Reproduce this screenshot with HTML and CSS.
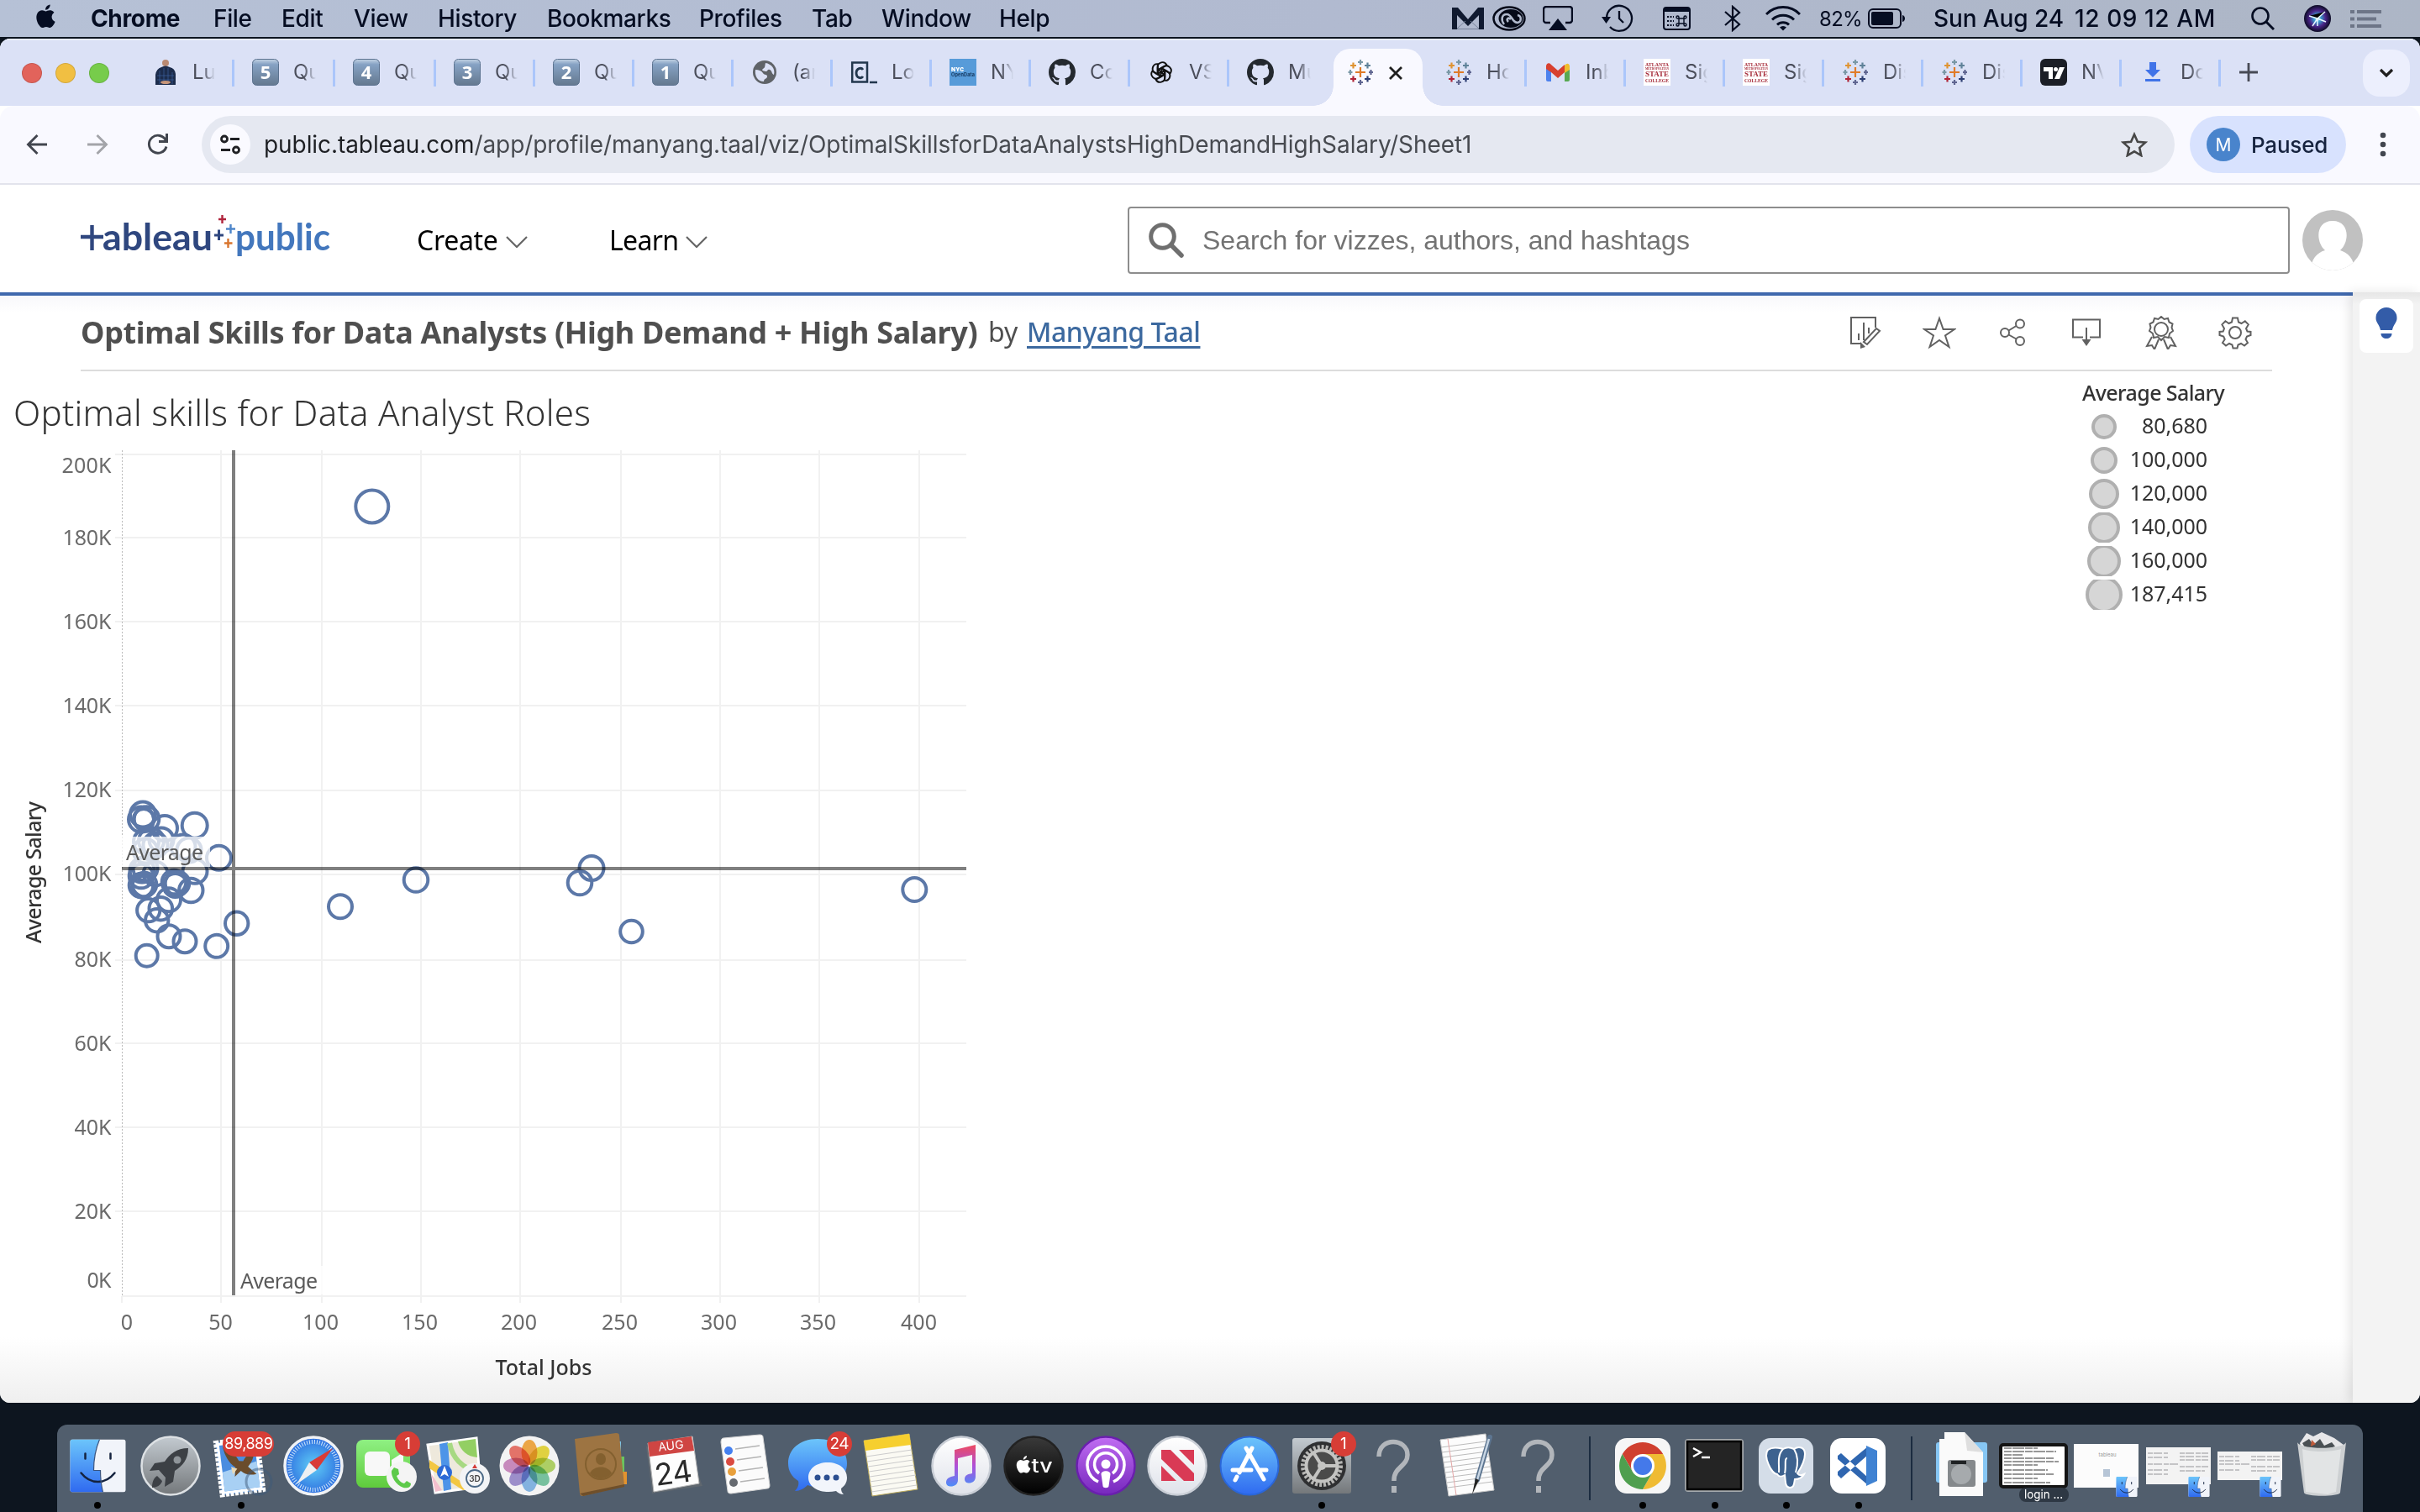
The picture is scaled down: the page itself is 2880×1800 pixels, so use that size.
FILE: index.html
```html
<!DOCTYPE html>
<html lang="en">
<head>
<meta charset="utf-8">
<title>Optimal Skills for Data Analysts</title>
<link rel="stylesheet" href="styles.css">
</head>
<body>
<svg class="defs" width="0" height="0">
  <defs>
    <linearGradient id="gKey" x1="0" y1="0" x2="0" y2="1"><stop offset="0" stop-color="#c3d3e4"/><stop offset=".2" stop-color="#86a2c4"/><stop offset="1" stop-color="#64788f"/></linearGradient>
    <linearGradient id="gBlue" x1="0" y1="0" x2="0" y2="1"><stop offset="0" stop-color="#6cc5fb"/><stop offset="1" stop-color="#2f6af0"/></linearGradient>
    <linearGradient id="gGrey" x1="0" y1="0" x2="0" y2="1"><stop offset="0" stop-color="#c3cad0"/><stop offset="1" stop-color="#74787b"/></linearGradient>
    <linearGradient id="gWhite" x1="0" y1="0" x2="0" y2="1"><stop offset="0" stop-color="#fff"/><stop offset="1" stop-color="#dfe2ea"/></linearGradient>
    <linearGradient id="gGreen" x1="0" y1="0" x2="0" y2="1"><stop offset="0" stop-color="#8ff083"/><stop offset="1" stop-color="#5fcb3c"/></linearGradient>
    <linearGradient id="gPurple" x1="0" y1="0" x2="0" y2="1"><stop offset="0" stop-color="#c06cf2"/><stop offset="1" stop-color="#7628bd"/></linearGradient>
    <linearGradient id="gBlack" x1="0" y1="0" x2="0" y2="1"><stop offset="0" stop-color="#3a3a3a"/><stop offset="1" stop-color="#000"/></linearGradient>
    <linearGradient id="gMusic" x1="0" y1="0" x2="0" y2="1"><stop offset="0" stop-color="#ee4a60"/><stop offset=".5" stop-color="#b04fd8"/><stop offset="1" stop-color="#4c8cf8"/></linearGradient>
    <radialGradient id="gSafari"><stop offset="0" stop-color="#5fcdf6"/><stop offset="1" stop-color="#2e6fe0"/></radialGradient>
    <radialGradient id="gSiri"><stop offset="0" stop-color="#e8f6ff"/><stop offset=".25" stop-color="#3a9fd0"/><stop offset=".6" stop-color="#4a2488"/><stop offset="1" stop-color="#0b0b24"/></radialGradient>
    <symbol id="tableau" viewBox="0 0 32 32"><g fill="none" stroke-width="2.200">
      <path stroke="#e07b28" d="M16 10v12M10 16h12"/><path stroke="#7a98a6" d="M16 1v6M13 4h6M4 13v6M1.500 16h5"/>
      <path stroke="#df9432" d="M7.500 4.500v7M4 8h7"/><path stroke="#5f8299" d="M24.500 4.500v7M21 8h7"/>
      <path stroke="#b02437" d="M7.500 20.500v7M4 24h7"/><path stroke="#2e3f73" d="M24.500 20.500v7M21 24h7"/>
      <path stroke="#5f6590" d="M28.500 13v6M26 16h5M16 25v6M13 28h6"/></g></symbol>
    <symbol id="github" viewBox="0 0 16 16"><path fill="#24292f" d="M8 0C3.580 0 0 3.580 0 8c0 3.540 2.290 6.530 5.470 7.590.4.070.55-.17.55-.38 0-.19-.01-.82-.01-1.490-2.010.37-2.530-.49-2.690-.94-.09-.23-.48-.94-.82-1.130-.28-.15-.68-.52-.01-.53.63-.01 1.080.58 1.230.82.72 1.210 1.870.87 2.330.66.070-.52.28-.87.510-1.070-1.780-.2-3.640-.89-3.640-3.950 0-.87.310-1.590.82-2.150-.08-.2-.36-1.020.08-2.120 0 0 .67-.21 2.200.82a7.600 7.600 0 0 1 4 0c1.530-1.040 2.200-.82 2.200-.82.440 1.100.16 1.920.08 2.120.510.56.82 1.270.82 2.150 0 3.070-1.870 3.750-3.650 3.950.290.25.540.73.540 1.480 0 1.070-.01 1.930-.01 2.200 0 .21.150.46.550.38A8 8 0 0 0 16 8c0-4.420-3.580-8-8-8z"/></symbol>
    <symbol id="face" viewBox="0 0 66 63"><rect width="66" height="63" rx="3" fill="#f1f4fa"/><path fill="url(#gBlue)" d="M3 0h32c-5 12-7 24-7 37h8c0 9 1 18 3 26H3a3 3 0 0 1-3-3V3a3 3 0 0 1 3-3z"/><path fill="none" stroke="#15233f" stroke-width="2.500" stroke-linecap="round" d="M18 17v6M48 17v6M13 40c11 14 29 14 40 0"/><path fill="none" stroke="#3b557f" stroke-width="1.200" d="M35 0c-5 12-7 24-7 37h8c0 9 1 18 3 26"/></symbol>
    <symbol id="apple" viewBox="0 0 26 32"><path d="M21.600 17c0-3.400 2.800-5 2.900-5.100-1.600-2.300-4-2.600-4.900-2.600-2.100-.2-4.100 1.200-5.100 1.200-1.100 0-2.700-1.200-4.400-1.200C7.800 9.400 5.700 10.700 4.500 12.700c-2.400 4.200-.6 10.400 1.700 13.800 1.200 1.700 2.500 3.500 4.300 3.500 1.700-.1 2.400-1.100 4.500-1.100s2.700 1.100 4.500 1.100c1.900 0 3-1.700 4.200-3.400 1.300-1.900 1.800-3.800 1.900-3.900-.1 0-4-1.500-4-5.700zM18.200 6.800c.9-1.200 1.600-2.700 1.400-4.300-1.400.1-3 .9-4 2.100-.9 1-1.700 2.600-1.500 4.200 1.600.1 3.200-.8 4.100-2z"/></symbol>
    <symbol id="ask" viewBox="0 0 86 104"><path fill="none" stroke="#b2b6bb" stroke-width="5.500" d="M26 38c0-24 34-22 34-2 0 14-16 14-16 30v1"/><path fill="#b2b6bb" d="M41 73h6v8h-6z"/></symbol>
    <symbol id="college" viewBox="0 0 32 32"><rect width="32" height="32" fill="#fff"/><g fill="#a52a38" font-family="Liberation Serif" font-weight="700" text-anchor="middle"><text x="16" y="9" font-size="6.500" textLength="28" lengthAdjust="spacingAndGlyphs">ATLANTA</text><text x="16" y="13" font-size="3.500" textLength="28">METROPOLITAN</text><text x="16" y="21" font-size="8.500" textLength="28" lengthAdjust="spacingAndGlyphs">STATE</text><text x="16" y="28" font-size="6.500" textLength="28" lengthAdjust="spacingAndGlyphs">COLLEGE</text></g></symbol>
    <symbol id="key" viewBox="0 0 32 32"><rect x=".5" y=".5" width="31" height="31" rx="5" fill="url(#gKey)" stroke="#5c7390"/></symbol>
  </defs>
</svg>

<header class="menubar">
  <svg class="mb-apple" width="26" height="32"><use href="#apple"/></svg>
  <nav class="menus"><b class="m1">Chrome</b><span class="m2">File</span><span class="m3">Edit</span><span class="m4">View</span><span class="m5">History</span><span class="m6">Bookmarks</span><span class="m7">Profiles</span><span class="m8">Tab</span><span class="m9">Window</span><span>Help</span></nav>
  <div class="status">
    <svg width="38" height="26" viewBox="0 0 38 26"><path fill="#101a30" d="M0 0h7l12 14L31 0h7v26h-6V9L19 22 6 9v17H0z"/><path fill="none" stroke="#77829a" d="M6 25l10-9M32 25l-10-9M6 25.500h26"/></svg>
    <svg class="s-cc" width="40" height="30" viewBox="0 0 40 30"><ellipse cx="20" cy="15" rx="18.500" ry="13.500" fill="none" stroke="#050a18" stroke-width="2.500"/><ellipse cx="22" cy="15" rx="14.500" ry="11" fill="#050a18"/><path fill="none" stroke="#b0b9cc" stroke-width="2.500" d="M14 22c-4-5-3-12 3-12 7 0 6 10 13 10 5-1 5-8 0-9M19 19c-3-3 0-6 3-3"/></svg>
    <svg class="s-air" width="36" height="30" viewBox="0 0 36 30"><path fill="none" stroke="#050d22" stroke-width="2.400" d="M9 20H4a3 3 0 0 1-3-3V4a3 3 0 0 1 3-3h28a3 3 0 0 1 3 3v13a3 3 0 0 1-3 3h-5"/><path fill="#050d22" d="M18 15l11 14H7z"/></svg>
    <svg class="s-tm" width="38" height="34" viewBox="0 0 38 34"><path fill="none" stroke="#050d22" stroke-width="2.300" d="M6 17A15 15 0 1 1 10 27M21 8v9l5 5"/><path fill="#050d22" d="M0 15h11l-5.500 8z"/></svg>
    <svg class="s-kb" width="33" height="28" viewBox="0 0 33 28"><rect x="1" y="1" width="31" height="26" rx="3" fill="none" stroke="#050d22" stroke-width="2"/><path fill="#050d22" d="M1 1h31v5H1z"/><g fill="none" stroke="#050d22"><path stroke-width="1.800" stroke-dasharray="2 1.500" d="M5 12h8M5 17h8M5 22h8"/><path stroke-width="1.400" d="M19 14h6v6h-6zM19 14h-1.500a1.500 1.500 0 1 1 1.500-1.500zM25 14v-1.500a1.500 1.500 0 1 1 1.500 1.500zM19 20v1.500a1.500 1.500 0 1 1-1.500-1.500zM25 20h1.500a1.500 1.500 0 1 1-1.500 1.500z"/></g></svg>
    <svg class="s-bt" width="20" height="32" viewBox="0 0 20 32"><path fill="none" stroke="#050d22" stroke-width="2.200" d="M1 8l17 15-8 7V2l8 7L1 24"/></svg>
    <svg class="s-wf" width="42" height="30" viewBox="0 0 42 30"><g fill="none" stroke="#050d22" stroke-width="3"><path d="M1 10a28 28 0 0 1 40 0M8 16.500a19 19 0 0 1 26 0M14 22.500a10 10 0 0 1 14 0"/></g><path fill="#050d22" d="M17 25.500a6 6 0 0 1 8 0L21 29.500z"/></svg>
    <span class="pct">82%</span>
    <svg class="s-bat" width="45" height="24" viewBox="0 0 45 24"><rect x="1" y="1" width="38" height="22" rx="5" fill="none" stroke="#050d22" stroke-width="2"/><rect x="4" y="4" width="26" height="16" rx="2" fill="#050d22"/><path fill="#050d22" d="M41 8c4 1 4 7 0 8z"/></svg>
    <span class="clock1">Sun Aug 24</span><span class="clock2">12 09 12 AM</span>
    <svg class="s-find" width="28" height="28" viewBox="0 0 28 28"><circle cx="11" cy="11" r="9.500" fill="none" stroke="#050d22" stroke-width="2.600"/><path stroke="#050d22" stroke-width="3" d="M18 18l9 9"/></svg>
    <svg class="s-siri" width="32" height="32" viewBox="0 0 32 32"><circle cx="16" cy="16" r="16" fill="url(#gSiri)"/><path stroke="#e8f6ff" stroke-width="1.500" d="M6 13l10 3 9-8M16 16l10 4M16 16l-6 9M16 16v9"/></svg>
    <svg class="s-list" width="37" height="21" viewBox="0 0 37 21"><path stroke="#6d7587" stroke-width="4" d="M0 2h5M8 2h29M0 10.500h5M8 10.500h23M0 19h5M8 19h29"/></svg>
  </div>
</header>

<section class="window">
  <div class="tabstrip">
    <div class="lights"><i class="red"></i><i class="yellow"></i><i class="green"></i></div>
    <div class="tab wide"><svg class="fav" viewBox="0 0 32 32"><circle cx="17" cy="5" r="4" fill="#b98a73"/><path fill="#1c2c4c" d="M12 10q5-3 10 0 6 1 7 8v13H5V19q1-7 7-9z"/><path stroke="#3f69a8" stroke-opacity=".6" d="M10 14v16M15 11v18M20 11v18M25 16v14M7 20h20M7 25h20"/><ellipse cx="17" cy="28" rx="6" ry="2" fill="#c69579"/></svg><span>Lu</span></div>
    <div class="tab wide"><svg class="fav" viewBox="0 0 32 32"><use href="#key"/><text class="keynum" x="16" y="24">5</text></svg><span>Qu</span></div>
    <div class="tab wide"><svg class="fav" viewBox="0 0 32 32"><use href="#key"/><text class="keynum" x="16" y="24">4</text></svg><span>Qu</span></div>
    <div class="tab"><svg class="fav" viewBox="0 0 32 32"><use href="#key"/><text class="keynum" x="16" y="24">3</text></svg><span>Qu</span></div>
    <div class="tab"><svg class="fav" viewBox="0 0 32 32"><use href="#key"/><text class="keynum" x="16" y="24">2</text></svg><span>Qu</span></div>
    <div class="tab"><svg class="fav" viewBox="0 0 32 32"><use href="#key"/><text class="keynum" x="16" y="24">1</text></svg><span>Qu</span></div>
    <div class="tab"><svg class="fav" viewBox="0 0 32 32"><circle cx="16" cy="16" r="14" fill="#5f6368"/><path fill="#dbe1f6" d="M5 13c4 0 7 1 9 4s5 1 5 4-4 2-4 6c-7 0-11-6-10-14zM17 5c-1 4 0 5-3 7s2 3 4 3 1-3 4-2 2 5 5 6c2-7-3-13-10-14z"/></svg><span>(ar</span></div>
    <div class="tab"><svg class="fav" viewBox="0 0 32 32"><path fill="none" stroke="#22374d" stroke-width="2.500" d="M20 4.500H2.200v23H20zM23 28h9"/><path fill="none" stroke="#22374d" stroke-width="2.800" d="M15 13c-2-3-8-2-8 4s6 7 8 4"/></svg><span>Lo</span></div>
    <div class="tab"><svg class="fav" viewBox="0 0 32 32"><rect width="32" height="32" fill="#579bd9"/><text x="2" y="15" font-family="Inter" font-weight="900" font-size="6.500" fill="#fff" textLength="15">NYC</text><text x="2" y="21" font-family="Inter" font-weight="700" font-size="5.500" fill="#14365c" textLength="28">OpenData</text></svg><span>NY</span></div>
    <div class="tab"><svg class="fav"><use href="#github"/></svg><span>Co</span></div>
    <div class="tab"><svg class="fav" viewBox="0 0 32 32"><g fill="none" stroke="#111" stroke-width="1.900"><path id="k" d="M16 20.500l-4.500-2.600v-7.400c0-7 8.500-8.500 11-3l-6 3.500v5"/><use href="#k" transform="rotate(60 16 16)"/><use href="#k" transform="rotate(120 16 16)"/><use href="#k" transform="rotate(180 16 16)"/><use href="#k" transform="rotate(240 16 16)"/><use href="#k" transform="rotate(300 16 16)"/></g></svg><span>VS</span></div>
    <div class="tab nosep"><svg class="fav"><use href="#github"/></svg><span>Mu</span></div>
    <div class="tab active"><svg class="fav"><use href="#tableau"/></svg><svg class="close" width="16" height="16" viewBox="0 0 16 16"><path stroke="#1f1f1f" stroke-width="2.800" d="M1 1l14 14M15 1L1 15"/></svg></div>
    <div class="tab"><svg class="fav"><use href="#tableau"/></svg><span>Ho</span></div>
    <div class="tab"><svg class="fav" viewBox="0 0 32 32"><path fill="#4d82ee" d="M2 10l6 4v13H4a2 2 0 0 1-2-2z"/><path fill="#58a852" d="M30 10l-6 4v13h4a2 2 0 0 0 2-2z"/><path fill="#efbd2d" d="M24 8c3-4 6-2 6 1v4l-6 4z"/><path fill="#d8402f" d="M2 9c0-4 4-5 6-2l8 7 8-7v9l-8 7-8-7-6-4z"/></svg><span>Inb</span></div>
    <div class="tab"><svg class="fav"><use href="#college"/></svg><span>Sig</span></div>
    <div class="tab"><svg class="fav"><use href="#college"/></svg><span>Sig</span></div>
    <div class="tab"><svg class="fav"><use href="#tableau"/></svg><span>Dis</span></div>
    <div class="tab"><svg class="fav"><use href="#tableau"/></svg><span>Dis</span></div>
    <div class="tab"><svg class="fav" viewBox="0 0 32 32"><rect width="32" height="32" rx="6" fill="#1b1e26"/><path fill="#fff" d="M4 10h11v14h-5v-9H4zM23 10h6l-6 14h-6z"/><circle cx="18.500" cy="12.500" r="2.500" fill="#fff"/></svg><span>NV</span></div>
    <div class="tab"><svg class="fav" viewBox="0 0 32 32"><path fill="#4073e8" d="M12 4h8v9h5l-9 9-9-9h5zM7 24h18v3H7z"/></svg><span>Do</span></div>
    <svg class="plus" width="22" height="22" viewBox="0 0 22 22"><path stroke="#474a55" stroke-width="2.800" d="M11 0v22M0 11h22"/></svg>
    <div class="tabmenu"><svg width="18" height="12" viewBox="0 0 18 12"><path fill="none" stroke="#1f1f1f" stroke-width="3.200" d="M2 2l7 7 7-7"/></svg></div>
  </div>

  <div class="toolbar">
    <svg class="t-back" width="26" height="26" viewBox="0 0 26 26"><path fill="none" stroke="#42464f" stroke-width="2.900" d="M25 13H3M13.500 2L2.500 13l11 11"/></svg>
    <svg class="t-fwd" width="26" height="26" viewBox="0 0 26 26"><path fill="none" stroke="#a3a4a9" stroke-width="2.900" d="M1 13h22M12.500 2l11 11-11 11"/></svg>
    <svg class="t-load" width="26" height="26" viewBox="0 0 26 26"><path fill="none" stroke="#42464f" stroke-width="2.900" d="M23 15.500A10.500 10.500 0 1 1 22.500 8.500"/><path fill="none" stroke="#42464f" stroke-width="3" d="M23.500 0v9.500H14"/></svg>
    <div class="omnibox">
      <div class="tune"><svg width="26" height="26" viewBox="0 0 26 26"><g fill="none" stroke="#202124" stroke-width="2.800"><circle cx="6" cy="6.500" r="3.500"/><circle cx="20" cy="19.500" r="3.500"/><path d="M13 6.500h11M2 19.500h11"/></g></svg></div>
      <p class="url"><span>public.tableau.com</span>/app/profile/manyang.taal/viz/OptimalSkillsforDataAnalystsHighDemandHighSalary/Sheet1</p>
      <svg class="star" width="32" height="30" viewBox="0 0 32 30"><path fill="none" stroke="#474747" stroke-width="2.600" d="M16 3l3.900 8.700 9.300.9-7 6.300 2 9.200-8.200-4.800-8.200 4.800 2-9.200-7-6.300 9.300-.9z"/></svg>
    </div>
    <div class="profile"><span class="pfp">M</span><span>Paused</span></div>
    <svg class="kebab" width="8" height="30" viewBox="0 0 8 30"><g fill="#42464f"><circle cx="4" cy="4" r="3.300"/><circle cx="4" cy="15" r="3.300"/><circle cx="4" cy="26" r="3.300"/></g></svg>
  </div>

  <div class="sitehead">
    <svg class="logo" width="300" height="80" viewBox="96 240 300 80">
      <path stroke="#2f477f" stroke-width="4.400" d="M96 282h27M109.500 268v30"/>
      <g font-family="Lato" font-size="43" font-weight="700"><text x="122" y="297.500" fill="#2f477f" textLength="131" lengthAdjust="spacingAndGlyphs">ableau</text><text x="280" y="297.500" fill="#4377bd" textLength="113" lengthAdjust="spacingAndGlyphs">public</text></g>
      <path stroke="#2f477f" stroke-width="3" d="M260.500 273.500v12.500M255 280h11"/><path stroke="#4e86ca" stroke-width="2.400" d="M274.500 267v11M269 272.500h11"/><path stroke="#d9752e" stroke-width="2.400" d="M271.500 284v11M267 289.500h9.500"/><path stroke="#b0243c" stroke-width="2.400" d="M264.500 256v10M260 261h9"/>
    </svg>
    <div class="drop create">Create<svg width="26" height="14" viewBox="0 0 26 14"><path fill="none" stroke="#666" stroke-width="2.200" d="M1 1l12 12L25 1"/></svg></div>
    <div class="drop learn">Learn<svg width="26" height="14" viewBox="0 0 26 14"><path fill="none" stroke="#666" stroke-width="2.200" d="M1 1l12 12L25 1"/></svg></div>
    <div class="search"><svg width="42" height="42" viewBox="0 0 42 42"><circle cx="16.500" cy="16.500" r="13.800" fill="none" stroke="#6f6f6f" stroke-width="5"/><path stroke="#6f6f6f" stroke-width="5.500" stroke-linecap="round" d="M27 27l12 12"/></svg><span>Search for vizzes, authors, and hashtags</span></div>
    <svg class="user" width="72" height="72" viewBox="0 0 72 72"><clipPath id="uc"><circle cx="36" cy="36" r="36"/></clipPath><g clip-path="url(#uc)"><path fill="#c1c1c1" d="M0 0h72v72H0z"/><path fill="#fff" d="M36 13c21 0 20 26 9 35 10 3 17 11 17 24H10c0-13 7-21 17-24-11-9-12-35 9-35z"/></g></svg>
  </div>

  <div class="page">
    <main class="content">
      <div class="titlebar">
        <h1>Optimal Skills for Data Analysts (High Demand + High Salary)</h1><span class="by">by</span><a>Manyang Taal</a>
        <div class="actions">
          <svg width="40" height="40" viewBox="0 0 40 40"><path d="M32 14V2H3v31h12M12 29v-8M18 29V8M24 21v-7M18 31l15-16 4 3-15 16z"/><path class="solid" d="M14 31v8l6-2z"/></svg>
          <svg width="40" height="40" viewBox="0 0 40 40"><path d="M20 3l4.600 13H38L27 23.500 31.500 37 20 29 8.500 37 13 23.500 2 16h13.400z"/></svg>
          <svg width="40" height="40" viewBox="0 0 40 40"><circle cx="10" cy="20" r="5"/><circle cx="28" cy="9.500" r="5"/><circle cx="28" cy="30" r="5"/><path d="M14.500 17.500l9-5.500M14.500 22.500l9 5"/></svg>
          <svg width="40" height="40" viewBox="0 0 40 40"><path d="M15 25.500H3V4.500h32v21H23M19 14v15"/><path class="solid" d="M13.500 28h11L19 36z"/></svg>
          <svg width="40" height="40" viewBox="0 0 40 40"><circle cx="20" cy="16" r="8"/><path d="M20 1l3.500 3 4.500-1 1.500 4.500 4 2-1 4.500L34 18l-4 3-1 5-5-1-4 4-4-4-5 1-1-5-4-3 1.500-4-1-4.500 4-2L12 3l4.500 1zM9 25L3 36l6-1 3 5 5-12M31 25l6 11-6-1-3 5-5-12"/></svg>
          <svg width="40" height="40" viewBox="0 0 40 40"><circle cx="20" cy="20" r="7"/><path d="M17 2.500h6l1 5 3.500 1.500 4.300-2.800 4 4.200L33 15l1.500 3.500 4 .5v4l-4.500 1.500-1.500 3.500 2.500 4-4 3.500-4-2.500-3.500 1.500-1 4h-5l-1-4-3.500-1.500-4 2.500-4-3.500 2.700-4-1.500-3.500-4.700-1.500v-4l4.200-.5L7 15l-2.600-4.600 4-4.200L12.500 9 16 7.500z"/></svg>
        </div>
      </div>
      <div class="viz">
        <svg class="chart" width="1160" height="1228" viewBox="0 442 1160 1228">
          <text class="vtitle" x="16" y="506.500" textLength="687">Optimal skills for Data Analyst Roles</text>
          <g class="grid"><path d="M137 541h1013M137 640h1013M137 740h1013M137 840h1013M137 941h1013M137 1041h1013M137 1143h1013M137 1242h1013M137 1342h1013M137 1442h1013M145 1543h1005M263 536v1015M383 536v1015M501 536v1015M619 536v1015M739 536v1015M857 536v1015M975 536v1015M1094 536v1015M145 1543v8"/></g>
          <path stroke="#bbb" stroke-dasharray="2 2" d="M145.500 536v1006"/>
          <g class="ylab"><text x="132.500" y="562.500" textLength="59">200K</text><text x="132.500" y="649" textLength="58">180K</text><text x="132.500" y="749" textLength="58">160K</text><text x="132.500" y="849" textLength="58">140K</text><text x="132.500" y="948.500" textLength="58">120K</text><text x="132.500" y="1048.500" textLength="58">100K</text><text x="132.500" y="1150.500" textLength="44">80K</text><text x="132.500" y="1251" textLength="44">60K</text><text x="132.500" y="1351" textLength="44">40K</text><text x="132.500" y="1451" textLength="44">20K</text><text x="132.500" y="1532.500" textLength="29">0K</text></g>
          <g class="xlab"><text x="151" y="1582.500">0</text><text x="262.500" y="1582.500">50</text><text x="381.500" y="1582.500">100</text><text x="499.500" y="1582.500">150</text><text x="617.500" y="1582.500">200</text><text x="737.500" y="1582.500">250</text><text x="855.500" y="1582.500">300</text><text x="973.500" y="1582.500">350</text><text x="1093.500" y="1582.500">400</text></g>
          <g class="marks">
            <circle cx="170" cy="969.500" r="15"/><circle cx="168" cy="975.500" r="15"/><circle cx="174.500" cy="975" r="14.800"/><circle cx="171" cy="975" r="12"/>
            <circle cx="196" cy="986" r="15"/><circle cx="231.700" cy="982.700" r="15"/><circle cx="260.500" cy="1021.300" r="14.500"/>
            <circle cx="174" cy="1002" r="15"/><circle cx="180" cy="1001" r="15"/><circle cx="192" cy="1000" r="14.500"/><circle cx="185" cy="1006" r="14.500"/><circle cx="173" cy="1013" r="14.500"/><circle cx="218" cy="1008" r="14.500"/><circle cx="225" cy="1012" r="14.500"/>
            <circle cx="169" cy="1036" r="14.500"/><circle cx="173" cy="1034" r="14.500"/><circle cx="185" cy="1040" r="14.300"/><circle cx="168" cy="1043" r="14.300"/><circle cx="168" cy="1054" r="14.300"/><circle cx="172" cy="1053" r="14.300"/><circle cx="170" cy="1056" r="13"/>
            <circle cx="232" cy="1037.300" r="14.500"/><circle cx="207" cy="1050" r="14.300"/><circle cx="211" cy="1051.500" r="14.300"/><circle cx="208.500" cy="1054" r="14"/><circle cx="227.300" cy="1060" r="14.200"/><circle cx="201" cy="1071.300" r="14"/>
            <circle cx="176.700" cy="1083.700" r="13.600"/><circle cx="191.300" cy="1081.700" r="13.800"/><circle cx="186.700" cy="1095.700" r="13.700"/><circle cx="201" cy="1114.700" r="13.500"/><circle cx="220" cy="1120.700" r="13.500"/><circle cx="257.700" cy="1126.300" r="13.500"/><circle cx="174.700" cy="1137.700" r="13"/><circle cx="281.700" cy="1099.300" r="13.700"/>
            <circle cx="405" cy="1079.300" r="14"/><circle cx="442.800" cy="603" r="19.500"/><circle cx="495" cy="1047.500" r="14.300"/><circle cx="690" cy="1051" r="14.300"/><circle cx="704" cy="1033.500" r="14.500"/><circle cx="751.500" cy="1109" r="13.300"/><circle cx="1088.300" cy="1059" r="14"/>
          </g>
          <path fill="#fff" fill-opacity=".75" d="M145 996h105v36H145z"/><path fill="#fff" fill-opacity=".8" d="M281 1507h103v34H281z"/>
          <path stroke="#000" stroke-opacity=".5" stroke-width="4" d="M145 1034h1005M278 536v1006"/>
          <g class="avg"><text x="150" y="1024" textLength="92">Average</text><text x="286" y="1534" textLength="92">Average</text></g>
          <g class="atitle"><text x="647" y="1637" textLength="115">Total Jobs</text><text transform="translate(49 1038.500) rotate(-90)" textLength="169">Average Salary</text></g>
        </svg>
        <div class="legend">
          <h2>Average Salary</h2>
          <ul>
            <li><i class="d1"></i><span>80,680</span></li><li><i class="d2"></i><span>100,000</span></li><li><i class="d3"></i><span>120,000</span></li><li><i class="d4"></i><span>140,000</span></li><li><i class="d5"></i><span>160,000</span></li><li><i class="d6"></i><span>187,415</span></li>
          </ul>
        </div>
      </div>
    </main>
    <aside class="side"><div class="tip"><svg width="26" height="38" viewBox="0 0 26 38"><path fill="#335ca8" d="M13 0a12.500 12.500 0 0 1 12.500 13c0 5-4 7-5.500 14H6C4.500 20 .5 18 .5 13A12.500 12.500 0 0 1 13 0zM6.500 31h13c0 8-13 8-13 0z"/></svg></div></aside>
  </div>
</section>

<footer class="dock">
  <div class="app on"><svg viewBox="0 0 86 104"><use href="#face" x="10" y="17.500" width="67" height="63"/></svg></div>
  <div class="app"><svg viewBox="0 0 86 104"><circle cx="44" cy="49" r="34.500" fill="url(#gGrey)" stroke="#dde1e4" stroke-width="2.500"/><path fill="#3c4045" d="M65 28c-14 0-22 7-28 16l-12 2-6 9 11-1 8 9-1 11 10-6 2-13c9-6 16-13 16-27zM28 61l6 6c-1 5-7 8-12 8 0-5 1-11 6-14z"/><circle cx="52" cy="42" r="4.500" fill="#8f959a"/></svg></div>
  <div class="app on"><svg viewBox="0 0 86 104"><g transform="rotate(-7 42 49)"><path fill="#4a8de0" stroke="#fff" stroke-width="5" stroke-dasharray="4 1.500" d="M16 18h50v63H16z"/><path fill="#fff" d="M17 19h48v61H17z"/><path fill="#4a8de0" d="M20 22h42v55H20z"/><path fill="#a8d0f4" d="M20 54l42-8v31H20z"/><path fill="#6a4c2c" d="M24 24c8 4 14 10 17 19l5 1c4-6 8-9 15-11-2 8-5 14-10 18l9 10c-8 1-14-1-18-6l-8 6 2-11c-7-6-11-15-12-26z"/><path fill="#e9d9b5" d="M31 49l7 3-6 6z"/></g><circle cx="64" cy="68" r="15" fill="none" stroke="#3d5a7a" stroke-opacity=".5" stroke-width="3"/></svg><b class="badge long">89,889</b></div>
  <div class="app"><svg viewBox="0 0 86 104"><circle cx="43" cy="49" r="34" fill="url(#gSafari)" stroke="#f0f2f5" stroke-width="3.500"/><circle cx="43" cy="49" r="28.500" fill="none" stroke="#cfe6fb" stroke-width="5" stroke-dasharray="1 2"/><path fill="#d93b37" d="M66 28L38 45l9 9z"/><path fill="#eef0f2" d="M23 71l15-26 9 9z"/></svg></div>
  <div class="app"><svg viewBox="0 0 86 104"><rect x="8" y="18" width="64" height="57" rx="8" fill="url(#gGreen)"/><rect x="18" y="32" width="30" height="29" rx="6" fill="#f8f8f8"/><path fill="#f8f8f8" d="M50 42l14-9v28l-14-9z"/><circle cx="62" cy="62" r="18" fill="#f4f4f4"/><path fill="#5dca4a" d="M53 51l5 2 1 6-3 2c2 5 5 8 9 9l3-3 5 3c0 5-5 6-9 5-9-3-15-14-14-20z"/></svg><b class="badge">1</b></div>
  <div class="app"><svg viewBox="0 0 86 104"><path fill="#eee9dc" stroke="#fff" stroke-width="3" d="M8 24l58-8 5 58-54 7z"/><path fill="#93cf63" d="M44 20l21-3 2 22c-12-1-20-8-23-19z"/><path fill="#f3c742" d="M10 42l50 34-10 2-40-26z"/><path fill="#4d94e8" d="M22 23l10-2 4 56-9 2z"/><path fill="none" stroke="#a7d982" stroke-width="6" d="M34 22c4 20 16 30 34 34"/><path fill="#f3bfce" d="M12 58l13 20-8 2z"/><circle cx="28" cy="57" r="9" fill="#2c6ad6"/><path fill="#fff" d="M28 49l5 13-5-3-5 3z"/><circle cx="64" cy="64" r="18" fill="#f3f4f6"/><circle cx="64" cy="64" r="10" fill="none" stroke="#4a6886" stroke-width="1.800"/><path fill="#d43b38" d="M64 47l3 5h-6z"/><text x="64" y="68" font-family="Inter" font-size="10" font-weight="600" text-anchor="middle" fill="#444">3D</text></svg></div>
  <div class="app"><svg viewBox="0 0 86 104"><circle cx="43" cy="49" r="35.500" fill="#f3f3f3"/><g class="petals"><ellipse cx="43" cy="33" rx="9.500" ry="15" fill="#f6a536"/><ellipse cx="43" cy="33" rx="9.500" ry="15" fill="#e9d92e" transform="rotate(45 43 49)"/><ellipse cx="43" cy="33" rx="9.500" ry="15" fill="#aed45a" transform="rotate(90 43 49)"/><ellipse cx="43" cy="33" rx="9.500" ry="15" fill="#6fc59c" transform="rotate(135 43 49)"/><ellipse cx="43" cy="33" rx="9.500" ry="15" fill="#7db4e8" transform="rotate(180 43 49)"/><ellipse cx="43" cy="33" rx="9.500" ry="15" fill="#9a8ad0" transform="rotate(225 43 49)"/><ellipse cx="43" cy="33" rx="9.500" ry="15" fill="#cc85c0" transform="rotate(270 43 49)"/><ellipse cx="43" cy="33" rx="9.500" ry="15" fill="#ee6a5e" transform="rotate(315 43 49)"/></g></svg></div>
  <div class="app"><svg viewBox="0 0 86 104"><path fill="#7cc4e6" d="M58 20h8v18h-8z"/><path fill="#6bc45e" d="M58 38h12v18H58z"/><path fill="#e2932f" d="M58 56h15v15H58z"/><path fill="#9d7442" d="M11 17l49-7c3 0 4 1 4 3l6 60-49 12c-3 0-4-1-4-3z"/><path fill="#6f4f2a" d="M17 82l53-11v3l-49 11z"/><circle cx="42" cy="47" r="18" fill="none" stroke="#83602f" stroke-width="2"/><ellipse cx="42" cy="41" rx="6" ry="7" fill="#83602f"/><path fill="#83602f" d="M29 58c4-10 22-10 26 0-7 8-19 8-26 0z"/></svg></div>
  <div class="app"><svg viewBox="0 0 86 104"><path fill="#5f676f" d="M10 26h50l17 47-60 9z"/><path fill="#fdfdfd" stroke="#b9b9b9" d="M12 22l53-8 8 56-54 10z"/><path fill="#cf4543" d="M12 21l52-7 3 17-53 7z"/><text transform="translate(40 30) rotate(-7)" font-family="Inter" font-size="14" fill="#fff" text-anchor="middle">AUG</text><text transform="translate(44 70) rotate(-8)" font-family="Inter" font-size="36" fill="#2a2a2a" text-anchor="middle">24</text></svg></div>
  <div class="app"><svg viewBox="0 0 86 104"><path fill="#fbfbfb" stroke="#d5d5d5" d="M17 16l43-4c3 0 4 1 4 3l8 57c0 3-1 4-3 4l-43 6c-3 0-4-1-4-3l-8-58c0-3 1-5 3-5z"/><g stroke="#b4b4b4" stroke-width="1.500"><path d="M31 29l29-4M33 42l29-4M35 55l29-4M37 68l29-4"/></g><circle cx="23" cy="31" r="5" fill="#4480f0"/><circle cx="25" cy="44" r="5" fill="#da4a40"/><circle cx="27" cy="56" r="5" fill="#e8a03c"/><circle cx="29" cy="69" r="5" fill="#666a70"/></svg></div>
  <div class="app"><svg viewBox="0 0 86 104"><path fill="url(#gBlue)" d="M43 17c22 0 35 13 35 29S65 74 43 74c-5 0-9-1-12-2-4 4-9 7-15 7 4-4 5-8 4-12-8-5-12-12-12-21 0-16 13-29 35-29z"/><path fill="#f2f5fb" d="M55 45c14 0 23 8 23 18 0 6-3 10-7 13 0 3 1 5 3 7-4 0-7-2-9-4-16 4-33-3-33-16 0-10 9-18 23-18z"/><g fill="#2c4f91"><circle cx="43" cy="63" r="3.500"/><circle cx="54" cy="63" r="3.500"/><circle cx="65" cy="63" r="3.500"/></g></svg><b class="badge">24</b></div>
  <div class="app"><svg viewBox="0 0 86 104"><path fill="#fbfaf3" stroke="#b9a85a" d="M12 19l54-8 10 66-54 8z"/><path fill="#f6cf2f" d="M12 19l54-8 2 13-54 7z"/><path stroke="#ccc" d="M15 38l54-8M16 44l54-8M17 50l54-8M18 56l54-8M19 62l54-8M19 68l55-8M20 74l54-8M21 80l54-8"/></svg></div>
  <div class="app"><svg viewBox="0 0 86 104"><circle cx="43" cy="49" r="34.500" fill="url(#gWhite)" stroke="#c9ced6" stroke-width="2.500"/><path fill="url(#gMusic)" d="M35 30l25-6v38c0 9-13 10-13 3 0-5 4-6 9-7V36l-17 4v26c0 9-14 10-14 3 0-5 4-7 10-8z"/></svg></div>
  <div class="app"><svg viewBox="0 0 86 104"><circle cx="43" cy="49" r="34.500" fill="url(#gBlack)" stroke="#222" stroke-width="2.500"/><use href="#apple" x="20" y="35" width="20" height="24" fill="#fff"/><text x="53" y="57" font-family="Inter" font-size="23" font-weight="500" text-anchor="middle" fill="#fff" textLength="25" lengthAdjust="spacingAndGlyphs">tv</text></svg></div>
  <div class="app"><svg viewBox="0 0 86 104"><circle cx="43" cy="49" r="34.500" fill="url(#gPurple)" stroke="#6a1fae" stroke-width="2.500"/><g fill="none" stroke="#fff" stroke-width="3.500"><path d="M34 68a22 22 0 1 1 18 0M35 58a13.500 13.500 0 1 1 16 0"/></g><circle cx="43" cy="47" r="5.500" fill="#fff"/><path fill="#fff" d="M37.500 59c0-5 11-5 11 0l-2 14c0 3-7 3-7 0z"/></svg></div>
  <div class="app"><svg viewBox="0 0 86 104"><circle cx="43" cy="49" r="34.500" fill="url(#gWhite)" stroke="#c9ced6" stroke-width="2.500"/><path fill="#d93a55" d="M24 30h11l28 28v9H51L24 41zM45 30h18v18zM24 49v18h18z"/></svg></div>
  <div class="app"><svg viewBox="0 0 86 104"><circle cx="43" cy="49" r="34.500" fill="url(#gBlue)" stroke="#2a66d8" stroke-width="2"/><g stroke="#fff" stroke-width="5" stroke-linecap="round"><path d="M46 28L31 57M39 28l21 37M23 54h22M54 54h9M28 62l-2 4"/></g></svg></div>
  <div class="app on"><svg viewBox="0 0 86 104"><rect x="8" y="16" width="70" height="66" rx="3" fill="url(#gGrey)"/><circle cx="43" cy="49" r="29" fill="#2f3032"/><circle cx="43" cy="49" r="22.500" fill="none" stroke="#b6b6b4" stroke-width="5" stroke-dasharray="3 2"/><circle cx="43" cy="49" r="18.500" fill="#4a4a4a" stroke="#c4c4c2" stroke-width="4"/><path stroke="#c4c4c2" stroke-width="4" d="M43 49h19M43 49l-10-16M43 49l-10 16"/><circle cx="43" cy="49" r="5" fill="#c4c4c2"/></svg><b class="badge">1</b></div>
  <div class="app"><svg viewBox="0 0 86 104"><use href="#ask"/></svg></div>
  <div class="app"><svg viewBox="0 0 86 104"><path fill="#fcfcfc" stroke="#c9c9c9" d="M13 18l54-7 10 67-54 7z"/><path stroke="#bcbcbc" d="M14 27l53-7M15 33l53-7M16 39l53-7M17 45l53-7M18 51l53-7M19 57l53-7M20 63l53-7M21 69l53-7M22 75l53-7"/><path stroke="#e4a6a6" d="M22 17l10 67"/><path stroke="#5d7590" stroke-width="6" stroke-linecap="round" d="M72 15L57 66"/><path stroke="#c8d6e4" stroke-width="2.500" d="M71 17L57 66"/><path fill="#222" d="M55 64l4 2-8 17z"/></svg></div>
  <div class="app"><svg viewBox="0 0 86 104"><use href="#ask"/></svg></div>
  <div class="sep"></div>
  <div class="app on"><svg viewBox="0 0 86 104"><rect x="10" y="16" width="66" height="66" rx="14" fill="#f6f6f6"/><g transform="translate(43 49)"><path fill="#d0402f" d="M-24.200-14A28 28 0 0 1 24.200-14H0L-12 7z"/><path fill="#efbb33" d="M24.200-14A28 28 0 0 1 0 28L12 7 0-14z"/><path fill="#4f9f4f" d="M0 28A28 28 0 0 1-24.200-14L-12 7 12 7z"/><circle r="14" fill="#fff"/><circle r="11" fill="#4479ea"/></g></svg></div>
  <div class="app on"><svg viewBox="0 0 86 104"><rect x="8" y="18" width="68" height="61" rx="3" fill="#242424" stroke="#a7abae" stroke-width="2"/><rect x="10" y="20" width="64" height="57" fill="none" stroke="#000" stroke-width="2.500"/><path fill="none" stroke="#fff" stroke-width="2.500" d="M17 28l9 5-9 5M27 39h10"/></svg></div>
  <div class="app on"><svg viewBox="0 0 86 104"><rect x="10" y="16" width="65" height="66" rx="14" fill="#d4dde8"/><path fill="#3d628f" stroke="#fff" stroke-width="2" d="M21 30c7-5 14-2 18-1 5-3 9-2 13 0 6-4 13-2 13 6 0 8-5 17-9 23 2 3 6 2 8 1-3 6-8 6-11 6-1 6-1 10-6 10-6 0-5-9-6-15-5 3-7 2-9-1-7 0-17-22-11-29z"/><path fill="none" stroke="#fff" stroke-width="2" d="M39 29c-8 8-4 21-5 28M52 29c5 8 5 18 2 28M41 58c2-8-1-18 3-18"/></svg></div>
  <div class="app on"><svg viewBox="0 0 86 104"><rect x="9" y="16" width="66" height="66" rx="14" fill="#fff"/><path fill="#2f66b0" d="M18 37l4-3 32 29v9L18 41zM18 60l4 4 32-28V26L18 56z"/><path fill="#3f82d2" d="M52 25l13 6v36l-13 6z"/></svg></div>
  <div class="sep s2"></div>
  <div class="app"><svg viewBox="0 0 86 104"><rect x="12" y="21" width="61" height="48" rx="3" fill="#86c6f3"/><path fill="#fafafa" d="M22 9h24l22 24v52H16V17h6z"/><path fill="#dedede" d="M46 9l3 22 19 2z"/><rect x="26" y="42" width="33" height="32" rx="3" fill="#85898c"/><circle cx="42" cy="59" r="12" fill="#a6aaad"/><path fill="#1f2224" d="M30 43h18v4H30z"/></svg></div>
  <div class="app"><svg viewBox="0 0 86 104"><rect x="4" y="24" width="78" height="50" rx="3" fill="#fff" stroke="#141414" stroke-width="4"/><path stroke="#777" stroke-width="1.500" stroke-dasharray="9 1 14 1" d="M8 28h40M8 32h62M8 36h22M8 40h60M8 44h65M8 48h40M8 54h52M8 59h60M8 64h40M8 69h55"/><rect x="26" y="75" width="59" height="17" rx="8" fill="#2e3844"/><text x="55" y="88" font-family="Inter" font-size="14.500" text-anchor="middle" fill="#fff" textLength="46" lengthAdjust="spacingAndGlyphs">login ...</text></svg></div>
  <div class="app"><svg viewBox="0 0 86 104"><rect x="5" y="23" width="77" height="52" fill="#fcfcfc"/><text x="45" y="38" font-family="Inter" font-size="6" text-anchor="middle" fill="#999">tableau</text><rect x="40" y="53" width="8" height="9" fill="#b6c5d6"/><use href="#face" x="55" y="62" width="26" height="24"/></svg></div>
  <div class="app"><svg viewBox="0 0 86 104"><rect x="5" y="27" width="77" height="44" fill="#f3f3f3"/><path stroke="#c4c4c6" stroke-width="2" stroke-dasharray="6 1 10 2" d="M7 34h24M7 39h24M7 47h38M7 54h24M7 59h24M45 34h34M45 38h34M45 42h34M45 50h34M45 55h30"/><use href="#face" x="55" y="62" width="26" height="24"/></svg></div>
  <div class="app"><svg viewBox="0 0 86 104"><rect x="5" y="32" width="77" height="34" fill="#f3f3f3"/><path stroke="#c4c4c6" stroke-width="2" stroke-dasharray="6 1 10 2" d="M7 38h24M7 43h24M7 47h38M7 54h24M45 38h34M45 42h34M45 50h34M45 55h30"/><use href="#face" x="55" y="62" width="26" height="24"/></svg></div>
  <div class="app"><svg viewBox="0 0 86 104"><path fill="#e7e7e9" d="M17 22l8-12 8 4 10-5 15 7 11 8-4 10H20z"/><path fill="#4a5054" d="M20 22l8-5 5 7 8-7 5 8 9-4 4 5-10 3H24z"/><path fill="#bf5a3a" d="M31 18l5 5-6 3z"/><path fill="#cdd0d2" d="M14 21c3 9 55 9 58 0l-7 60c-2 5-41 5-43 0z"/><path fill="#e2e4e5" d="M20 29c10 4 34 4 46 0l-6 51-10 3-26-3z"/></svg></div>
</footer>
</body>
</html>
```
FILE: styles.css
```css
* { box-sizing: border-box; }
body { margin: 0; width: 2880px; height: 1800px; overflow: hidden; background: #0d151f; font-family: Inter, "Liberation Sans", sans-serif; display: flex; flex-direction: column; }
h1, h2, p, ul { margin: 0; padding: 0; }
svg { display: block; flex: none; }
.defs { position: absolute; }

.menubar { height: 44px; flex: none; display: flex; align-items: center; padding-left: 40px; background: linear-gradient(90deg, #b6c1d6, #b1bad0 55%, #adb6c6); color: #050d22; font-size: 28px; white-space: nowrap; }
.mb-apple { margin-top: -6px; fill: #050d22; }
.menus { display: flex; margin-left: 42px; letter-spacing: -.35px; font-weight: 500; }
.menus b { font-weight: 700; }
.m1 { width: 146px; } .m2 { width: 81px; } .m3 { width: 86px; } .m4 { width: 100px; } .m5 { width: 130px; }
.m6 { width: 181px; } .m7 { width: 134px; } .m8 { width: 83px; } .m9 { width: 140px; }
.status { display: flex; align-items: center; margin-left: auto; padding-right: 46px; font-weight: 500; }
.s-cc { margin-left: 10px; } .s-air { margin-left: 20px; } .s-tm { margin-left: 34px; } .s-kb { margin-left: 35px; }
.s-bt { margin-left: 40px; } .s-wf { margin-left: 29px; }
.pct { margin-left: 22px; width: 58px; font-size: 24px; font-weight: 400; letter-spacing: -.7px; }
.s-bat { margin-left: 0; }
.clock1 { margin-left: 33px; width: 168px; letter-spacing: -.1px; }
.clock2 { width: 174px; letter-spacing: .6px; }
.s-find { margin-left: 36px; } .s-siri { margin-left: 35px; } .s-list { margin-left: 23px; }

.window { height: 1624px; margin-top: 2px; flex: none; border-radius: 12px; overflow: hidden; display: flex; flex-direction: column; background: #fff; }
.tabstrip { height: 80px; flex: none; display: flex; align-items: center; background: #dbe1f6; padding-left: 26px; position: relative; border-top: 2px solid #e8ecfa; }
.lights { display: flex; gap: 16px; width: 133px; }
.lights i { width: 24px; height: 24px; border-radius: 50%; border: 1px solid rgba(0,0,0,.12); }
.red { background: #e2635b; } .yellow { background: #f1bf42; } .green { background: #77cc4b; }
.tab { width: 118px; height: 32px; flex: none; display: flex; align-items: center; padding-left: 21px; border-right: 3px solid #abc6fb; font-size: 24px; line-height: 30px; color: #4a4d5a; }
.tab.wide { width: 120px; }
.tab.nosep { border-color: transparent; }
.tab .fav { width: 32px; height: 32px; margin-top: -2px; }
.tab span { margin-left: 17px; margin-top: -2px; width: 27px; overflow: hidden; white-space: nowrap; -webkit-mask-image: linear-gradient(90deg, #000 45%, transparent); mask-image: linear-gradient(90deg, #000 45%, transparent); }
.keynum { font: 700 22px "Open Sans", sans-serif; fill: #fff; text-anchor: middle; }
.tab.active { position: relative; width: 106px; height: auto; margin: 10px 6px 0 6px; align-self: stretch; padding: 0 0 11px 16px; border: 0; background: #f9f9ff; border-radius: 20px 20px 0 0; }
.tab.active::before, .tab.active::after { content: ""; position: absolute; bottom: 0; width: 24px; height: 24px; }
.tab.active::before { right: 100%; background: radial-gradient(circle at 0 0, transparent 23.5px, #f9f9ff 24px); }
.tab.active::after { left: 100%; background: radial-gradient(circle at 100% 0, transparent 23.5px, #f9f9ff 24px); }
.close { margin-left: 18px; }
.plus { margin-left: 22px; margin-top: -2px; }
.tabmenu { margin-left: auto; margin-right: 12px; width: 56px; height: 56px; border-radius: 20px; background: #eceffd; display: grid; place-items: center; }

.toolbar { height: 94px; flex: none; display: flex; align-items: center; background: #f9f9ff; border-bottom: 2px solid #e2e3ec; border-radius: 16px 16px 0 0; padding-left: 31px; }
.t-fwd { margin-left: 46px; } .t-load { margin-left: 46px; }
.omnibox { width: 2348px; height: 68px; margin-left: 39px; border-radius: 34px; background: #e5e8f1; display: flex; align-items: center; padding-left: 10px; }
.tune { width: 48px; height: 48px; border-radius: 50%; background: #fafaff; display: grid; place-items: center; }
.url { margin-left: 16px; font-size: 28px; color: #474a50; white-space: nowrap; letter-spacing: -.07px; }
.url span { color: #1d1f23; }
.star { margin-left: auto; margin-right: 32px; }
.profile { width: 186px; height: 68px; margin-left: 18px; border-radius: 34px; background: #d8e2fe; display: flex; align-items: center; padding-left: 20px; gap: 13px; font-size: 26px; font-weight: 500; letter-spacing: -.2px; color: #16233f; }
.pfp { width: 40px; height: 40px; border-radius: 50%; background: #4984cc; color: #fff; font-size: 21px; font-weight: 400; display: grid; place-items: center; }
.kebab { margin-left: 40px; }

.sitehead { height: 128px; flex: none; display: flex; align-items: center; padding: 4px 0 0 96px; background: #fff; }
.logo { margin-top: -12px; }
.drop { display: flex; align-items: center; font: 32px "Noto Sans", sans-serif; color: #000; margin-top: -2px; }
.create { margin-left: 100px; width: 229px; letter-spacing: -.3px; } .learn { width: 617px; letter-spacing: -.7px; }
.drop svg { margin: 6px 0 0 9px; }
.search { width: 1383px; height: 80px; border: 2px solid #8d8d8d; border-radius: 4px; display: flex; align-items: center; padding-left: 23px; gap: 22px; font: 32px "Liberation Sans", Arial, sans-serif; color: #737373; }
.user { margin-left: 15px; }

.page { flex: 1; display: flex; }
.content { width: 2800px; border-top: 4px solid #4069ad; background: linear-gradient(#f8f8fb, #fff 20px, #fff 1240px, #efefef); display: flex; flex-direction: column; }
.titlebar { height: 90px; width: 2608px; margin-left: 96px; border-bottom: 2px solid #dcdcdc; display: flex; align-items: center; white-space: nowrap; font-family: "Noto Sans", sans-serif; font-size: 32px; color: #4f4f4f; }
.titlebar h1 { width: 1080px; margin-top: -2px; font-size: 36px; font-weight: 700; letter-spacing: -.33px; }
.by { width: 46px; margin-top: -3px; }
.titlebar a { margin-top: -3px; color: #3c699f; font-weight: 500; letter-spacing: -.45px; text-decoration: underline; text-decoration-thickness: 3px; text-underline-offset: 5px; }
.actions { margin-left: auto; margin-right: 24px; display: flex; gap: 48px; }
.actions svg { fill: none; stroke: #616161; stroke-width: 2; }
.actions .solid { fill: #616161; stroke: none; }
.viz { display: flex; flex: 1; }
.vtitle { font: 300 42px "Noto Sans", sans-serif; fill: #333; }
.grid { stroke: #f1f1f1; stroke-width: 2; }
.ylab, .xlab { font: 25px "Noto Sans", sans-serif; fill: #6a6a6a; }
.ylab { text-anchor: end; } .xlab { text-anchor: middle; }
.marks { fill: none; stroke: #5c78a8; stroke-width: 4; }
.avg { font: 25px "Noto Sans", sans-serif; fill: #5a5a5a; }
.atitle { font: 500 25px "Noto Sans", sans-serif; fill: #333; text-anchor: middle; }
.legend { margin-left: 1318px; padding-top: 6px; font-family: "Noto Sans", sans-serif; color: #333; }
.legend h2 { font-size: 25px; font-weight: 500; line-height: 38px; letter-spacing: -.6px; white-space: nowrap; }
.legend ul { list-style: none; padding-top: 4px; }
.legend li { height: 36px; margin-bottom: 4px; width: 149px; display: flex; align-items: center; justify-content: space-between; overflow: hidden; font-size: 25px; line-height: 36px; letter-spacing: -.05px; }
.legend span { margin-top: -4px; }
.legend i { flex: none; border-radius: 50%; background: #d6d6d6; border: 4px solid #b0b0b0; }
.d1 { width: 30px; height: 30px; margin-left: 11px; } .d2 { width: 32px; height: 32px; margin-left: 10px; } .d3 { width: 36px; height: 36px; margin-left: 8px; }
.d4 { width: 38px; height: 38px; margin-left: 7px; } .d5 { width: 40px; height: 40px; margin-left: 6px; } .d6 { width: 44px; height: 44px; margin-left: 4px; }
.side { width: 80px; background: linear-gradient(#e6e6e6, #f3f3f3 14px); padding: 8px; box-shadow: -4px 0 12px rgba(0,0,0,.1); }
.tip { width: 64px; height: 64px; border-radius: 8px; background: #fff; display: grid; place-items: center; padding-bottom: 6px; }

.dock { margin: 26px 0 0 68px; width: 2744px; height: 104px; flex: none; border-radius: 12px 12px 0 0; background: #515e6d; display: flex; padding-left: 5px; }
.app { position: relative; width: 85.7px; height: 104px; flex: none; }
.app svg { width: 86px; height: 104px; }
.app.on::after { content: ""; position: absolute; left: 39px; top: 92px; width: 8px; height: 8px; border-radius: 50%; background: #000; }
.badge { position: absolute; left: 54px; top: 8px; width: 30px; height: 30px; border-radius: 15px; background: #d73d36; color: #fff; font-size: 19px; font-weight: 400; line-height: 30px; text-align: center; letter-spacing: -.5px; }
.badge.long { left: 21px; width: 61px; font-size: 18px; }
.petals { mix-blend-mode: multiply; opacity: .9; }
.petals ellipse { mix-blend-mode: multiply; }
.sep { width: 39.5px; flex: none; background: linear-gradient(#1b2c40, #1b2c40) 19px 14px / 2px 76px no-repeat; }
.sep.s2 { width: 37px; }
```
